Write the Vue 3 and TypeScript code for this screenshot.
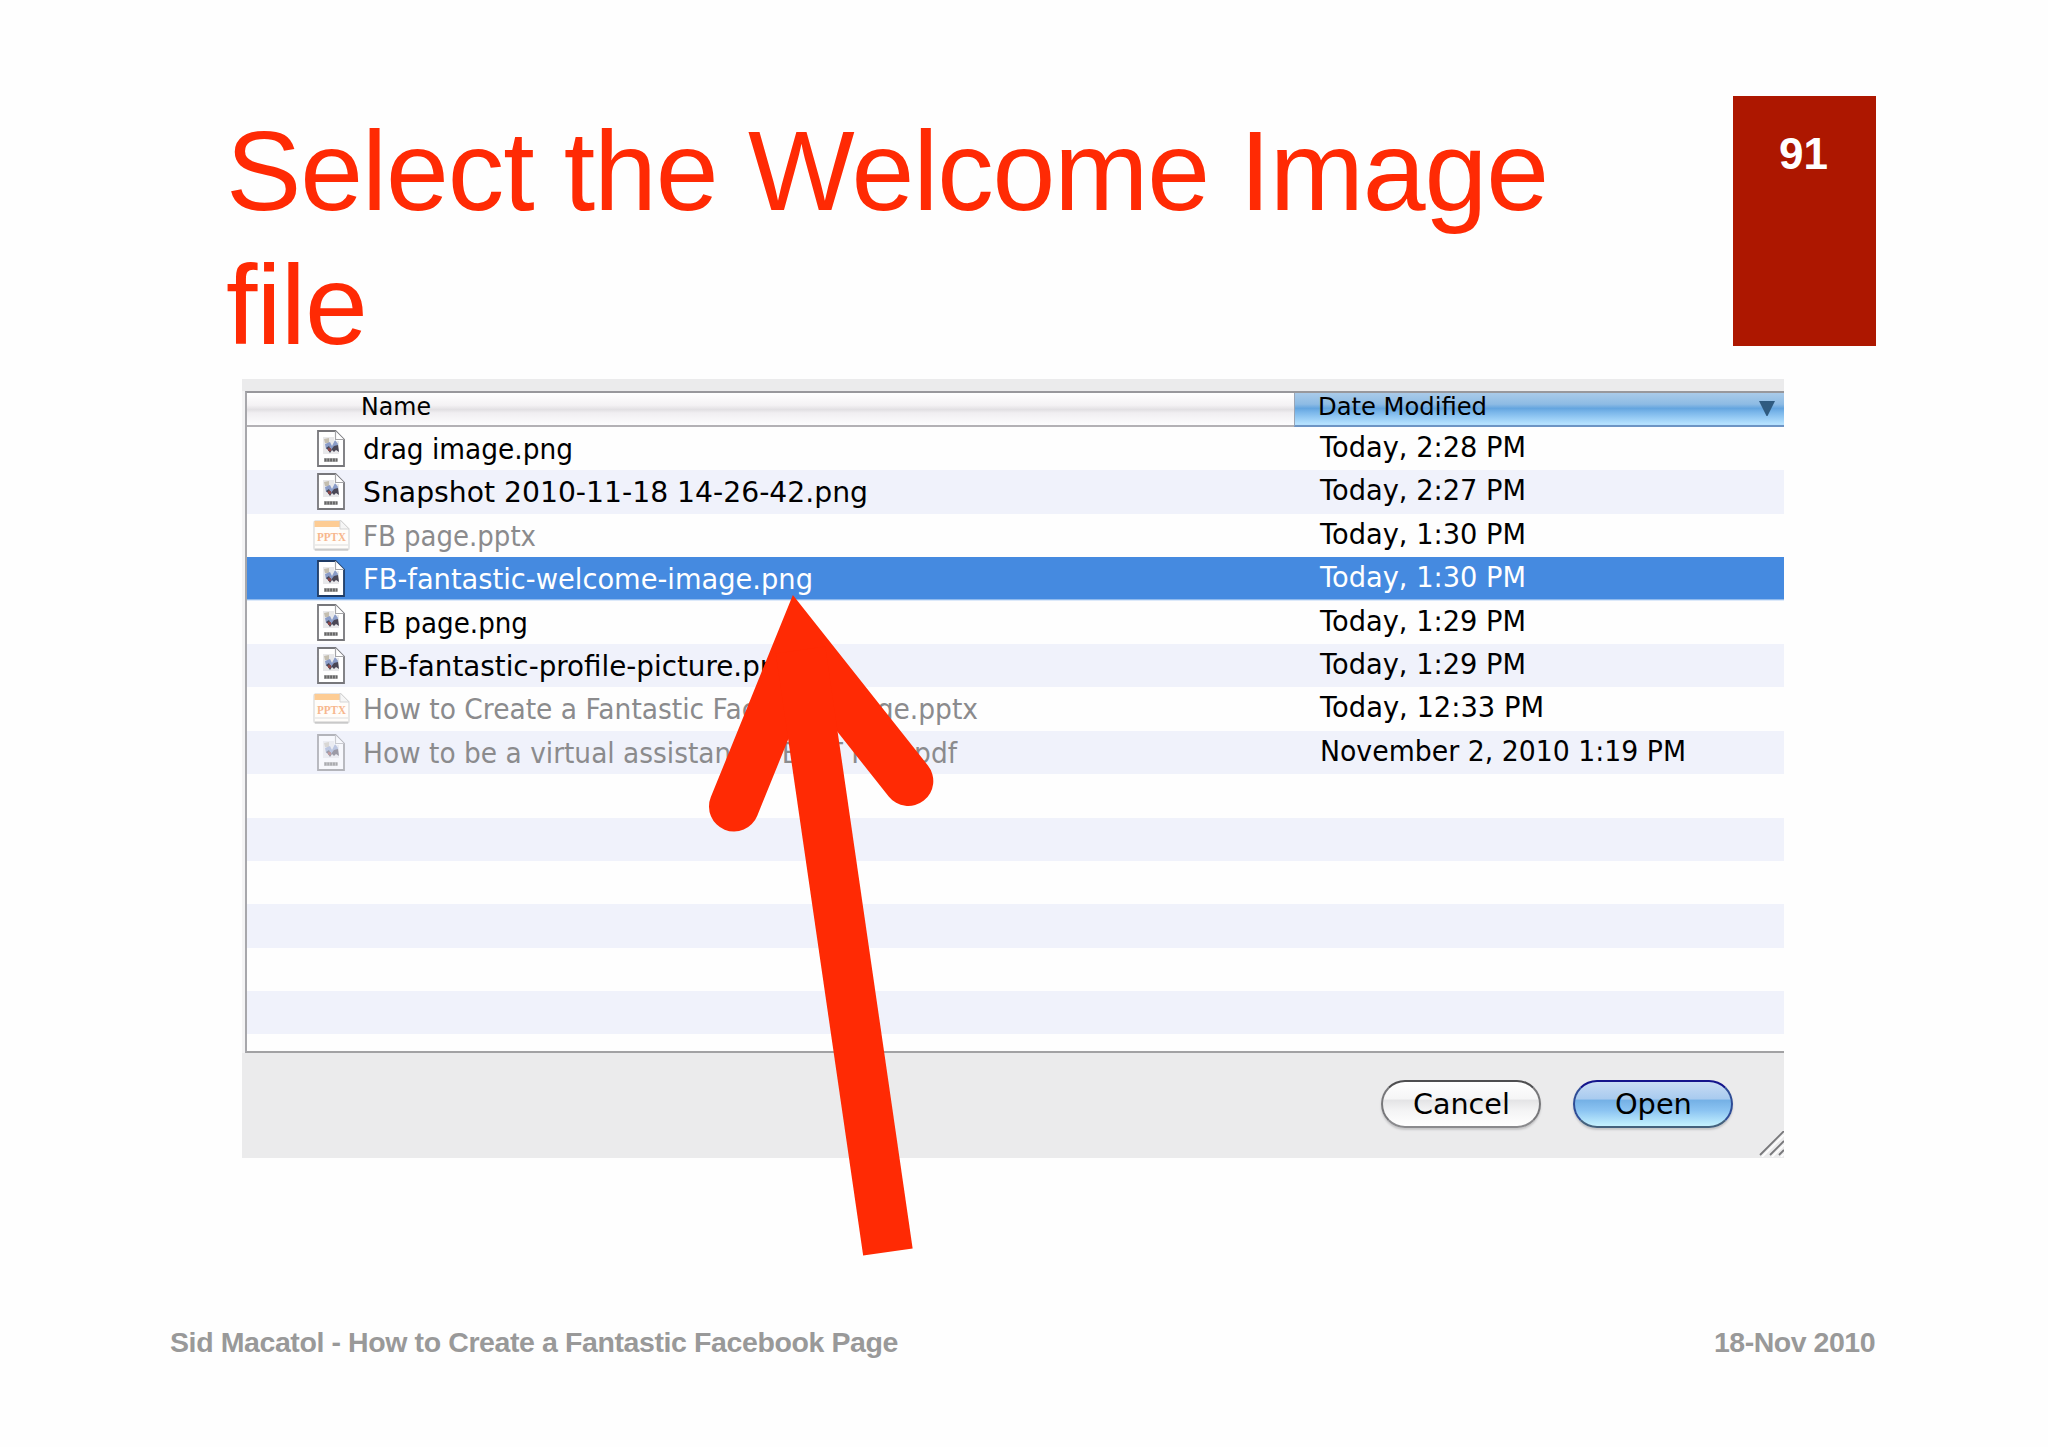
<script setup lang="ts">
import type { Directive } from 'vue'

interface FileRow {
  name: string
  nameWidth: number
  date: string
  dateWidth: number
  kind: 'image' | 'slides' | 'pdf'
  disabled?: boolean
  selected?: boolean
}

const files: FileRow[] = [
  { name: 'drag image.png', nameWidth: 210, date: 'Today, 2:28 PM', dateWidth: 206, kind: 'image' },
  { name: 'Snapshot 2010-11-18 14-26-42.png', nameWidth: 505, date: 'Today, 2:27 PM', dateWidth: 206, kind: 'image' },
  { name: 'FB page.pptx', nameWidth: 173, date: 'Today, 1:30 PM', dateWidth: 206, kind: 'slides', disabled: true },
  { name: 'FB-fantastic-welcome-image.png', nameWidth: 450, date: 'Today, 1:30 PM', dateWidth: 206, kind: 'image', selected: true },
  { name: 'FB page.png', nameWidth: 165, date: 'Today, 1:29 PM', dateWidth: 206, kind: 'image' },
  { name: 'FB-fantastic-profile-picture.png', nameWidth: 432, date: 'Today, 1:29 PM', dateWidth: 206, kind: 'image' },
  { name: 'How to Create a Fantastic Facebook Page.pptx', nameWidth: 615, date: 'Today, 12:33 PM', dateWidth: 224, kind: 'slides', disabled: true },
  { name: 'How to be a virtual assistants - EDIT FILE.pdf', nameWidth: 594, date: 'November 2, 2010 1:19 PM', dateWidth: 366, kind: 'pdf', disabled: true },
]
const emptyRows = 6

// Spreads a line of text over the given width with letter spacing.
const vFit: Directive<HTMLElement, number> = {
  mounted(el, { value }) {
    const count = (el.textContent ?? '').length
    const natural = el.getBoundingClientRect().width
    el.style.letterSpacing = `${(value - natural) / count}px`
  },
}

// Narrows or widens the glyphs themselves to the given width.
const vStretch: Directive<HTMLElement, number> = {
  mounted(el, { value }) {
    el.style.transform = `scaleX(${value / el.getBoundingClientRect().width})`
  },
}
</script>

<template>
  <main class="slide">
    <header class="top">
      <h1 class="title">
        <span v-fit="1322" class="line">Select the Welcome Image</span><br>
        <span v-fit="141" class="line">file</span>
      </h1>
      <div class="number">91</div>
    </header>

    <section class="dialog">
      <div class="list">
        <div class="head">
          <div class="col-name"><span v-stretch="70">Name</span></div>
          <div class="col-date">
            <span v-stretch="169">Date Modified</span>
            <svg class="sort" width="16" height="15" viewBox="0 0 16 15"><path d="M0 0H16L8.5 15H7.5Z" fill="#2f5b80" /></svg>
          </div>
        </div>
        <div
          v-for="file in files"
          :key="file.name"
          class="row"
          :class="{ selected: file.selected, disabled: file.disabled }"
        >
          <div class="icon">
            <svg v-if="file.kind === 'slides'" width="37" height="33" viewBox="0 0 37 33">
              <path d="M2 2H28L36 10V29Q36 31 34 31H3Q1 31 1 29V4Q1 2 3 2Z" fill="#fffdfa" stroke="#dedede" stroke-width="1.4" />
              <path d="M1.5 2H27V8H1.5Z" fill="#fdcc94" />
              <path d="M27 1V10H36Z" fill="#f6f6f6" stroke="#d5d5d5" />
              <text x="4" y="22" textLength="29" lengthAdjust="spacingAndGlyphs" class="ext">PPTX</text>
              <path d="M2 26H35" stroke="#ddd" />
              <path d="M2 30.5H35" stroke="#c9c9c9" stroke-width="2" />
            </svg>
            <svg v-else width="28" height="37" viewBox="0 0 28 37" :opacity="file.kind === 'pdf' ? 0.5 : 1">
              <path d="M1 1H18.5L27 9.500V36H1Z" fill="#fff" :stroke="file.selected ? '#1f3c66' : '#77777b'" stroke-width="1.8" />
              <path d="M18.500 1V9.500H27" fill="#fff" stroke="#a5a5a8" stroke-width="1.2" />
              <path d="M6 7H17V11H22V24H6Z" fill="#e8e8ea" />
              <path d="M7 9L12 8V13H8Z" fill="#c4beb0" />
              <path d="M8 14L13 12L15 16L18 10L21 14L20 18L15 20L9 19Z" fill="#8a9cc8" />
              <path d="M9 18L12 16L14 20L17 16L21 15L22 22L19 20L17 22L15 20L13 23L11 20Z" fill="#4a4756" />
              <path d="M11 18H14V21H11Z" fill="#8b4a4c" />
              <path d="M7 30H20.500" stroke="#b5b5b5" stroke-width="4" />
              <path d="M7.500 30H20.500" stroke="#666" stroke-width="3" stroke-dasharray="2 .8" />
            </svg>
          </div>
          <div class="name"><span v-stretch="file.nameWidth">{{ file.name }}</span></div>
          <div class="date"><span v-stretch="file.dateWidth">{{ file.date }}</span></div>
        </div>
        <div v-for="n in emptyRows" :key="n" class="row" />
      </div>
      <footer class="actions">
        <button class="btn cancel"><span v-stretch="97">Cancel</span></button>
        <button class="btn open"><span v-stretch="77">Open</span></button>
        <svg class="grip" width="26" height="26" viewBox="0 0 26 26">
          <g stroke="#fff" stroke-width="1.500"><path d="M4 26L26 4M14 26L26 14M23 26L26 23" /></g>
          <g stroke="#77777a" stroke-width="1.800"><path d="M2 24L26 0M12 24L26 10M21 24L26 19" /></g>
        </svg>
      </footer>
    </section>

    <svg class="arrow" width="2048" height="1447" viewBox="0 0 2048 1447" fill="none" stroke="#ff2a04" stroke-width="50">
      <path d="M734 806.500L799.900 644.100L908.300 781" stroke-linecap="round" stroke-linejoin="miter" />
      <path d="M887.900 1252L800.500 650" />
    </svg>

    <footer class="foot">
      <span v-fit="728">Sid Macatol - How to Create a Fantastic Facebook Page</span>
      <span v-fit="161">18-Nov 2010</span>
    </footer>
  </main>
</template>

<style>
body { margin: 0; background: #fefefe; }
</style>

<style scoped>
.slide {
  position: relative;
  box-sizing: border-box;
  width: 2048px;
  height: 1447px;
  overflow: hidden;
  background: #fefefe;
  font-family: "Liberation Sans", Arial, sans-serif;
}
span { display: inline-block; white-space: pre; }
.top {
  display: flex;
  justify-content: space-between;
  height: 283px;
  padding: 96px 172px 0 226px;
}
.title {
  margin: 9px 0 0;
  font-size: 113px;
  font-weight: 400;
  line-height: 133.500px;
  color: #ff2a04;
  white-space: nowrap;
}
.number {
  box-sizing: border-box;
  width: 143px;
  height: 250px;
  padding: 33px 48px 0 0;
  background: #ad1700;
  color: #fff;
  font-size: 44px;
  font-weight: 700;
  line-height: 50px;
  text-align: right;
}
.dialog {
  box-sizing: border-box;
  display: flex;
  flex-direction: column;
  width: 1542px;
  height: 779px;
  margin-left: 242px;
  padding-top: 12px;
  background: #ebebec;
  font-family: "DejaVu Sans", sans-serif;
  font-size: 28px;
  color: #000;
}
.dialog span { transform-origin: 0 50%; }
.list {
  box-sizing: border-box;
  height: 662px;
  overflow: hidden;
  border-left: 2px solid #a7a7ab;
  margin-left: 3px;
  border-top: 2px solid #98989c;
  border-bottom: 2px solid #a2a2a4;
  background: #fefefe;
  box-shadow: -3px 0 0 #f4f4f5;
}
.head {
  display: flex;
  height: 34px;
  font-size: 24px;
  line-height: 29px;
}
.col-name {
  box-sizing: border-box;
  flex: 1;
  padding-left: 114px;
  border-bottom: 2px solid #b3b1b5;
  background: linear-gradient(#fff 0%, #f4f2f4 38%, #e2e0e3 52%, #f0eef1 62%, #fdfdfe 100%);
}
.col-date {
  box-sizing: border-box;
  display: flex;
  justify-content: space-between;
  width: 490px;
  padding: 0 9px 0 23px;
  border-left: 1px solid #9aa5b5;
  border-bottom: 2px solid #6d94c4;
  background: linear-gradient(#a9cbe9 0%, #8dbbe4 35%, #64a5df 48%, #7ab6ea 60%, #b3e0fe 95%);
}
.sort { margin-top: 8px; }
.row {
  display: flex;
  height: 43.400px;
  line-height: 46px;
}
.row:nth-child(odd) { background: #f0f2fb; }
.row.selected {
  background: #458ae0;
  color: #fff;
  box-shadow: inset 0 -1.500px 0 #dce9fa;
}
.row.disabled .name { color: #8b8b8d; }
.icon {
  display: flex;
  align-items: center;
  justify-content: center;
  width: 40px;
  height: 43px;
  margin-left: 64px;
}
.ext {
  font-family: "Liberation Serif", serif;
  font-size: 12px;
  font-weight: 700;
  fill: #f7b78d;
}
.name { flex: 1; padding-left: 12px; }
.date { width: 464px; line-height: 42px; }
.actions {
  position: relative;
  display: flex;
  justify-content: flex-end;
  gap: 32px;
  padding: 27px 51px 0 0;
}
.btn {
  box-sizing: border-box;
  width: 160px;
  height: 48px;
  padding: 1px 0 0;
  border: 2px solid #777;
  border-color: #4e4e50 #77777a #8a8a8d;
  border-radius: 24px;
  font: inherit;
  line-height: 44px;
  color: #000;
  box-shadow: 0 2px 2px #c6c6c8;
}
.btn span { transform-origin: 50% 50%; }
.cancel { background: linear-gradient(#fff 0%, #f5f5f6 38%, #e4e4e6 42%, #f4f4f5 65%, #fff 100%); }
.open {
  border-color: #14148c #2e4c96 #44617d;
  background: linear-gradient(#c8dcf4 0%, #a9cbef 38%, #75b1e6 42%, #8cc4f2 65%, #c5f2ff 100%);
}
.grip { position: absolute; right: 0; bottom: -29px; }
.arrow { position: absolute; left: 0; top: 0; pointer-events: none; }
.foot {
  display: flex;
  justify-content: space-between;
  margin: 167px 173px 0 170px;
  font-size: 28.500px;
  font-weight: 700;
  line-height: 34px;
  color: #999;
}
</style>
